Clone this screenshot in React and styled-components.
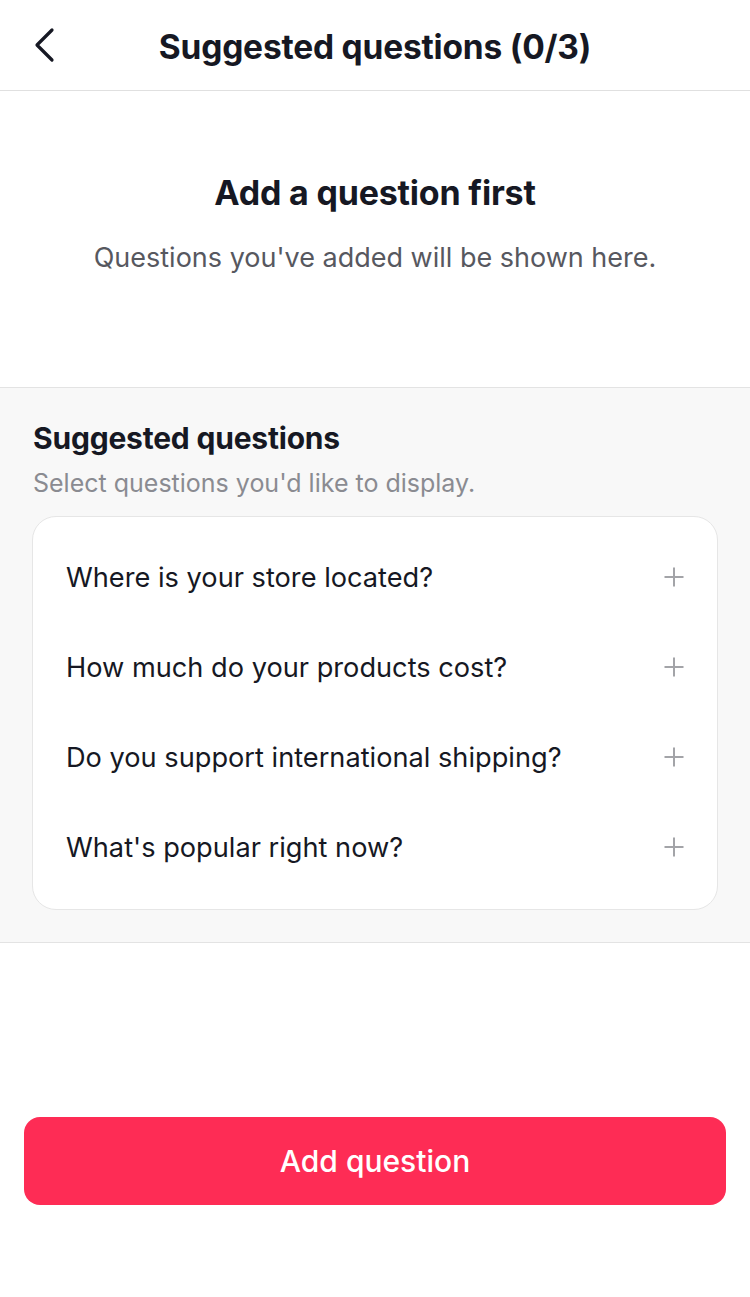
import React from 'react'
import styled, { createGlobalStyle } from 'styled-components'

const GlobalStyle = createGlobalStyle`
  html, body {
    margin: 0;
    padding: 0;
    background: #fff;
    font-family: Inter, "Noto Sans", sans-serif;
    -webkit-font-smoothing: antialiased;
  }
`

const Page = styled.div`
  width: 750px;
  min-height: 1297px;
  display: flex;
  flex-direction: column;
  background: #fff;
  color: #161823;
`

const Header = styled.header`
  height: 90px;
  display: grid;
  grid-template-columns: 90px 1fr 90px;
  align-items: center;
  border-bottom: 1px solid #e0e0e0;
`

const BackButton = styled.button`
  width: 90px;
  height: 90px;
  border: 0;
  background: none;
  padding: 0 0 0 32px;
  display: flex;
  align-items: center;
  cursor: pointer;
  color: #161823;
`

const Title = styled.h1`
  margin: 0;
  text-align: center;
  font-size: 33.5px;
  line-height: 40px;
  font-weight: 700;
  letter-spacing: -0.2px;
  padding-top: 4px;
`

const Empty = styled.section`
  height: 297px;
  display: flex;
  flex-direction: column;
  align-items: center;
  padding-top: 82px;
  box-sizing: border-box;
  border-bottom: 1px solid #e3e3e3;
`

const EmptyTitle = styled.h2`
  margin: 0;
  font-size: 34px;
  line-height: 40px;
  font-weight: 700;
  letter-spacing: -0.2px;
`

const EmptyText = styled.p`
  margin: 29px 0 0;
  font-size: 27px;
  line-height: 32px;
  color: #57585f;
`

const Suggestions = styled.section`
  background: #f8f8f8;
  padding: 32px 32px 32px 32px;
  border-bottom: 1px solid #e3e3e3;
`

const SectionTitle = styled.h3`
  margin: 0 0 0 1px;
  font-size: 30px;
  line-height: 36px;
  font-weight: 700;
  letter-spacing: -0.2px;
`

const SectionText = styled.p`
  margin: 12px 0 0 1px;
  font-size: 25px;
  line-height: 30px;
  color: #8a8b91;
`

const Card = styled.ul`
  list-style: none;
  margin: 18px 0 0;
  padding: 15px 0 17px;
  background: #fff;
  border: 1px solid #e6e6e6;
  border-radius: 24px;
`

const Row = styled.li`
  height: 90px;
  display: flex;
  align-items: center;
  justify-content: space-between;
  padding: 0 32px 0 33px;
  font-size: 27.2px;
  color: #161823;
`

const PlusIcon = () => (
  <svg width="22" height="22" viewBox="0 0 22 22" fill="none">
    <path d="M11 1.5v19M1.5 11h19" stroke="#a3a4a8" strokeWidth="2" />
  </svg>
)

const Spacer = styled.div`
  flex: 1;
`

const Footer = styled.div`
  padding: 0 24px 92px;
`

const PrimaryButton = styled.button`
  width: 100%;
  height: 88px;
  border: 0;
  border-radius: 16px;
  background: #fe2c55;
  color: #fff;
  font-family: inherit;
  font-size: 30px;
  font-weight: 500;
  cursor: pointer;
`

const questions = [
  'Where is your store located?',
  'How much do your products cost?',
  'Do you support international shipping?',
  "What's popular right now?",
]

export default function App() {
  return (
    <Page>
      <GlobalStyle />
      <Header>
        <BackButton aria-label="Back">
          <svg width="24" height="36" viewBox="0 0 24 36" fill="none">
            <path d="M20 3L5 18l15 15" stroke="#161823" strokeWidth="3.2" strokeLinecap="round" strokeLinejoin="round" />
          </svg>
        </BackButton>
        <Title>Suggested questions (0/3)</Title>
        <div />
      </Header>
      <Empty>
        <EmptyTitle>Add a question first</EmptyTitle>
        <EmptyText>Questions you've added will be shown here.</EmptyText>
      </Empty>
      <Suggestions>
        <SectionTitle>Suggested questions</SectionTitle>
        <SectionText>Select questions you'd like to display.</SectionText>
        <Card>
          {questions.map((q) => (
            <Row key={q}>
              <span>{q}</span>
              <PlusIcon />
            </Row>
          ))}
        </Card>
      </Suggestions>
      <Spacer />
      <Footer>
        <PrimaryButton>Add question</PrimaryButton>
      </Footer>
    </Page>
  )
}
